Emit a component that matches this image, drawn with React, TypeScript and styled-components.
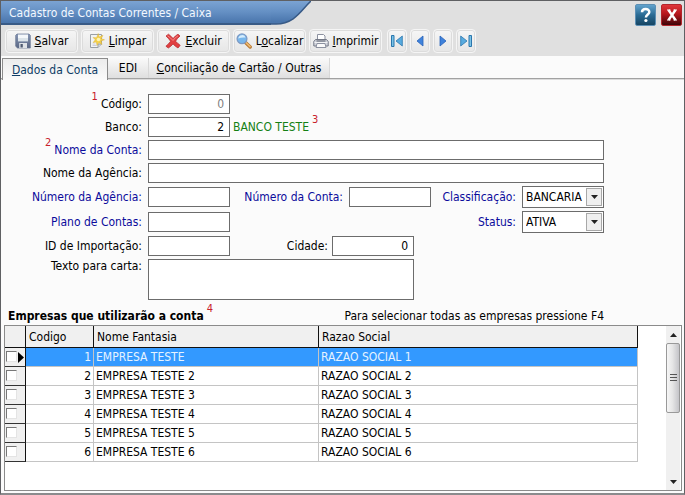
import React from "react";
import styled, { createGlobalStyle, css } from "styled-components";

const Global = createGlobalStyle`
  *, *::before, *::after { box-sizing: border-box; }
  body { margin: 0; background: #fff; }
  body, button, input, select, textarea {
    font-family: "DejaVu Sans Condensed", "DejaVu Sans", Tahoma, sans-serif;
    font-stretch: condensed;
    font-size: 12px;
    line-height: 14px;
    color: #000;
  }
`;

const Window = styled.div`
  display: flex;
  flex-direction: column;
  min-height: 100vh;
  background: #fbfbfb;
  border: 1px solid #5f6063;
  border-bottom: 2px solid #8b8b8d;
`;

const Header = styled.header`
  display: flex;
  justify-content: space-between;
  align-items: flex-start;
  height: 25px;
  background: #e0e0e0;
`;

const TitleBar = styled.div`
  display: flex;
  height: 24px;
`;

const Title = styled.h1`
  margin: 0;
  width: 270px;
  padding: 4px 8px;
  font-size: 12px;
  font-weight: 400;
  line-height: 16px;
  color: #f2f8ff;
  white-space: nowrap;
  background: linear-gradient(#7ba3d3, #6590c4 45%, #4a76ad 90%, #385a86 92%, #385a86);
`;

const WindowButtons = styled.div`
  display: flex;
  gap: 5px;
  padding: 3px 2px 0 0;
`;

const WindowButton = styled.button<{ $close?: boolean }>`
  display: flex;
  width: 21px;
  height: 22px;
  padding: 0;
  align-items: center;
  justify-content: center;
  border: 1px solid ${(p) => (p.$close ? "#b3262c" : "#5c8fb4")};
  border-radius: 2px;
  background: ${(p) =>
    p.$close
      ? "linear-gradient(#e0363b, #b5161c 45%, #3d0508)"
      : "linear-gradient(#62a3cd, #2a6b94 50%, #164563)"};
`;

const Toolbar = styled.div`
  display: flex;
  gap: 3px;
  padding: 3px 4px;
  background: #e0e0e0;
`;

const ToolButton = styled.button`
  display: flex;
  align-items: center;
  justify-content: center;
  gap: 4px;
  width: 73px;
  height: 24px;
  padding: 0;
  border: 1px solid #f5f5f5;
  border-radius: 4px;
  background: linear-gradient(#f6f6f6, #e6e6e6);
  box-shadow: inset 0 0 0 1px #dcdcdc;
  white-space: nowrap;

  svg { flex: none; }
`;

const NavButton = styled(ToolButton)`
  width: 20px;
`;

const NavGroup = styled.div`
  display: flex;
  gap: 3px;
  margin-left: 2px;
`;

const Tabs = styled.div`
  display: flex;
  align-items: flex-end;
  height: 24px;
  padding-left: 1px;
  background: linear-gradient(#fbfbfb, #fbfbfb 22px, #a2a2a2 22px, #a2a2a2 23px, #dcdcdc 23px);
`;

const Tab = styled.button<{ $active?: boolean; $width: number }>`
  width: ${(p) => p.$width}px;
  height: 20px;
  margin-bottom: 2px;
  padding: 0;
  border: 0;
  border-right: 1px solid #d8d8d8;
  background: linear-gradient(#fafafa, #dfdfdf);
  ${(p) =>
    p.$active &&
    css`
      height: 22px;
      margin-bottom: 0;
      border: 1px solid #8c8c8c;
      border-bottom: 0;
      background: linear-gradient(#ececec, #fbfbfb);
      color: #0f3d66;
    `}
`;

const Form = styled.form`
  display: grid;
  grid-template-columns: 137px 82px 107px 82px 1fr 82px;
  gap: 3px 6px;
  align-items: center;
  padding: 14px 80px 0 4px;
`;

const Label = styled.label<{ $required?: boolean; $top?: boolean }>`
  grid-column: ${(p) => (p.$top ? "1" : "auto")};
  align-self: ${(p) => (p.$top ? "start" : "center")};
  text-align: right;
  white-space: nowrap;
  color: ${(p) => (p.$required ? "#0b0b9c" : "#000")};
`;

const FirstLabel = styled(Label)`
  grid-column: 1;
`;

const Mark = styled.span`
  margin-right: 3px;
  line-height: 0;
  vertical-align: 8px;
  font-size: 11px;
  color: #c8202c;
`;

const EndMark = styled(Mark)`
  margin: 0 0 0 3px;
  font-weight: 400;
`;

const fieldBorder = css`
  border: 1px solid #6c6c6c;
  border-radius: 0;
  background: #fff;
`;

const Input = styled.input<{ $wide?: boolean; $muted?: boolean }>`
  ${fieldBorder}
  grid-column: ${(p) => (p.$wide ? "2 / -1" : "auto")};
  width: ${(p) => (p.$wide ? "100%" : "82px")};
  height: 20px;
  padding: 0 5px;
  text-align: ${(p) => (p.$wide ? "left" : "right")};
  color: ${(p) => (p.$muted ? "#808080" : "#000")};
`;

const BankName = styled.output`
  grid-column: 3 / -1;
  margin-left: -3px;
  color: #148014;
`;

const StatusLabel = styled(Label)`
  grid-column: 5;
`;

const SelectBox = styled.div`
  position: relative;
`;

const Select = styled.select`
  ${fieldBorder}
  display: block;
  appearance: none;
  width: 100%;
  height: 22px;
  padding: 0 18px 0 3px;
`;

const SelectArrow = styled.span`
  position: absolute;
  top: 2px;
  right: 2px;
  bottom: 2px;
  display: flex;
  width: 16px;
  align-items: center;
  justify-content: center;
  border: 1px solid #a8a8a8;
  background: #efefef;
  pointer-events: none;
`;

const Span = styled.div`
  grid-column: 2 / -1;
  display: flex;
  align-items: center;
  justify-content: space-between;
  width: 266px;
`;

const InlineField = styled.div`
  display: flex;
  align-items: center;
  gap: 4px;
`;

const TextArea = styled.textarea`
  ${fieldBorder}
  grid-column: 2 / -1;
  display: block;
  width: 266px;
  height: 41px;
  resize: none;
`;

const ListHeader = styled.div`
  display: flex;
  justify-content: space-between;
  padding: 9px 80px 2px 7px;
`;

const ListTitle = styled.h2`
  margin: 0;
  font-size: 12px;
  line-height: 14px;
  font-weight: 700;
`;

const GridFrame = styled.div`
  display: flex;
  flex: 1;
  justify-content: space-between;
  margin: 0 2px 2px 3px;
  border: 1px solid #8b8b8b;
  background: #fff;
`;

const TableArea = styled.div`
  flex: 1;
  padding-right: 28px;
`;

const Table = styled.table`
  width: 100%;
  table-layout: fixed;
  border-collapse: separate;
  border-spacing: 0;
`;

const Th = styled.th`
  height: 22px;
  padding: 0 3px;
  border-right: 1px solid #111;
  border-bottom: 1px solid #111;
  background: #f0f0f0;
  font-weight: 400;
  text-align: left;
`;

const Td = styled.td<{ $num?: boolean }>`
  height: 19px;
  padding: 0 2px;
  border-right: 1px solid #c4c4c4;
  border-bottom: 1px solid #c4c4c4;
  text-align: ${(p) => (p.$num ? "right" : "left")};
`;

const Row = styled.tr<{ $selected?: boolean }>`
  ${(p) =>
    p.$selected &&
    css`
      background: #3399ff;
      color: #e6f3ff;
    `}
`;

const CheckCell = styled(Td)`
  padding: 0 1px;
  border-right: 1px solid #111;
  border-bottom: 1px solid #333;
  background: #f0f0f0;
`;

const CheckWrap = styled.div`
  display: flex;
  align-items: center;
  justify-content: space-between;
`;

const Check = styled.input`
  appearance: none;
  width: 11px;
  height: 11px;
  margin: 0 0 2px;
  border: 1px solid #e4e4e4;
  border-top: 1px solid #777;
  border-left: 1px solid #777;
  background: #fff;
`;

const ScrollBar = styled.div`
  display: flex;
  flex-direction: column;
  width: 14px;
  margin-right: 1px;
  background: #f0f0f0;
`;

const ScrollButton = styled.button`
  display: flex;
  height: 17px;
  padding: 0;
  align-items: center;
  justify-content: center;
  border: 0;
  background: #f0f0f0;
`;

const ScrollTrack = styled.div`
  flex: 1;
`;

const ScrollThumb = styled.div`
  display: flex;
  height: 70px;
  align-items: center;
  justify-content: center;
  border: 1px solid #999;
  border-radius: 2px;
  background: linear-gradient(90deg, #f6f6f6, #e6e6e6 45%, #c4c4c8);
`;

const SaveIcon = () => (
  <svg width="16" height="16" viewBox="0 0 16 16" aria-hidden="true">
    <defs>
      <linearGradient id="disk" x1="0" y1="0" x2="0" y2="1">
        <stop offset="0" stopColor="#8796b4" />
        <stop offset="1" stopColor="#5a6784" />
      </linearGradient>
    </defs>
    <path d="M2 1h12l1.300 1.300v12.700H2.500L.7 13.300V2.300z" fill="url(#disk)" stroke="#66728f" strokeWidth=".7" />
    <path d="M3 1.500h10v6.700H3z" fill="#f4f7fa" />
    <path d="M3 5h10v3.200H3z" fill="#dbe3e9" />
    <path d="M4.200 10h7.800v5H4.200z" fill="#dfe3e7" />
    <path d="M5.500 11h2.300v3.500H5.500z" fill="#4f5b72" />
  </svg>
);

const ClearIcon = () => (
  <svg width="16" height="16" viewBox="0 0 16 16" aria-hidden="true">
    <path d="M1.500 1.500h11v9.500l-3.500 3.500H1.500z" fill="#f1f3f4" stroke="#9a9fa5" />
    <path d="M12.500 11H9v3.500" fill="#d3d7db" stroke="#9a9fa5" />
    <path d="M3.500 11h3M3.500 12.500h4" stroke="#ccd" />
    <path d="M9.200.5l1 3.500L14 2.300l-1.800 3.400 3.300 1.100-3.500 1.200 1 3.500-3.200-2-1.800 3-.7-3.500-3.300.6 2.300-2.800L4 4.500l3.600.2z" fill="#f4d14c" stroke="#d9ab2c" strokeWidth=".4" />
    <circle cx="9.500" cy="6.500" r="1.800" fill="#fff4b0" />
  </svg>
);

const DeleteIcon = () => (
  <svg width="16" height="16" viewBox="0 0 16 16" aria-hidden="true">
    <path
      d="M1 3l2.500-1.800Q6 3 8.100 5.500 10.300 2.500 13 1.200L15 3Q12 5.500 10.600 8.200 12.600 10.500 15.200 12.300L13 15Q10.300 13.500 8 10.900 6 13.500 3.300 15L.9 13.200Q3.700 11 5.600 8.300 3.900 5.700 1 3z"
      fill="#e13f41"
      stroke="#b3242a"
      strokeWidth=".7"
    />
    <path d="M2.500 2.800Q6 5 8 7.500 10 4.500 13 2.800" fill="none" stroke="#f28a86" />
  </svg>
);

const SearchIcon = () => (
  <svg width="16" height="16" viewBox="0 0 16 16" aria-hidden="true">
    <path d="M9.500 9.500l4.700 4.500" stroke="#b87934" strokeWidth="3.400" strokeLinecap="round" />
    <path d="M9.500 9.200l4.600 4.400" stroke="#f0bd73" strokeWidth="1.500" strokeLinecap="round" />
    <circle cx="6" cy="5.800" r="4.900" fill="#78b7ec" stroke="#7e9ac4" strokeWidth="1.300" />
    <path d="M2.300 5.500a3.800 3.800 0 0 1 7.300-1Q5.500 4 2.300 5.500z" fill="#d7edfc" />
  </svg>
);

const PrintIcon = () => (
  <svg width="16" height="16" viewBox="0 0 16 16" aria-hidden="true">
    <path d="M4.500 7V1.500h6L12 3v4" fill="#fff" stroke="#8c91a0" />
    <path d="M2.500 6.500h11l1.700 2v4.500H.8V8.500z" fill="#cfd2da" stroke="#747987" />
    <path d="M3.500 8h9" stroke="#555b68" />
    <path d="M4 10.500h8l1 4H3z" fill="#fafafa" stroke="#8c91a0" />
    <path d="M1.500 9.500h13" stroke="#f2f3f5" />
  </svg>
);

const NavIcon = ({ flip, bar }: { flip?: boolean; bar?: boolean }) => (
  <svg width="14" height="14" viewBox="0 0 14 14" aria-hidden="true">
    <g transform={flip ? "matrix(-1 0 0 1 14 0)" : undefined}>
      {bar && <path d="M1.500 1.500h2.500v11H1.500z" fill="#79c2e6" stroke="#2b76ad" />}
      <path
        d={bar ? "M12.300 2v10L6 7z" : "M10 2v10L4 7z"}
        fill={bar ? "#58abdf" : "#3f83dc"}
        stroke={bar ? "#2b76ad" : "#2962b8"}
        strokeWidth=".8"
      />
    </g>
  </svg>
);

const Triangle = ({ up }: { up?: boolean }) => (
  <svg width="7" height="4" viewBox="0 0 7 4" aria-hidden="true">
    <path d={up ? "M0 4h7L3.500 0z" : "M0 0h7L3.500 4z"} fill="#222" />
  </svg>
);

const tools = [
  { pre: "", key: "S", post: "alvar", icon: <SaveIcon /> },
  { pre: "", key: "L", post: "impar", icon: <ClearIcon /> },
  { pre: "", key: "E", post: "xcluir", icon: <DeleteIcon /> },
  { pre: "L", key: "o", post: "calizar", icon: <SearchIcon /> },
  { pre: "", key: "I", post: "mprimir", icon: <PrintIcon /> },
];

const companies = [1, 2, 3, 4, 5, 6].map((id) => ({
  id,
  name: id === 1 ? "EMPRESA TESTE" : `EMPRESA TESTE ${id}`,
  legal: `RAZAO SOCIAL ${id}`,
}));

const Combo = ({ id, value }: { id: string; value: string }) => (
  <SelectBox>
    <Select id={id} defaultValue={value}>
      <option>{value}</option>
    </Select>
    <SelectArrow>
      <Triangle />
    </SelectArrow>
  </SelectBox>
);

export default function App() {
  return (
    <>
      <Global />
      <Window>
        <Header>
          <TitleBar>
            <Title>Cadastro de Contas Correntes / Caixa</Title>
            <svg width="40" height="24" viewBox="0 0 40 24" aria-hidden="true">
              <defs>
                <linearGradient id="title" x1="0" y1="0" x2="0" y2="1">
                  <stop offset="0" stopColor="#7ba3d3" />
                  <stop offset=".45" stopColor="#6590c4" />
                  <stop offset=".9" stopColor="#4a76ad" />
                </linearGradient>
              </defs>
              <path d="M0 0H40C31 8 24 23 5 23H0z" fill="url(#title)" />
              <path d="M40 0C31 8 24 23 5 23H0" fill="none" stroke="#385a86" strokeWidth="1.500" />
            </svg>
          </TitleBar>
          <WindowButtons>
            <WindowButton type="button" aria-label="Ajuda">
              <svg width="13" height="16" viewBox="0 0 13 16" aria-hidden="true">
                <path d="M3 5.200C3 .9 10.300 1 10.300 5 10.300 7.500 6.900 7.500 6.900 10.500" fill="none" stroke="#fff" strokeWidth="2.500" />
                <circle cx="6.900" cy="13.500" r="1.600" fill="#fff" />
              </svg>
            </WindowButton>
            <WindowButton type="button" $close aria-label="Fechar">
              <svg width="12" height="12" viewBox="0 0 12 12" aria-hidden="true">
                <path d="M2.500 1l7 10M9.500 1l-7 10" stroke="#fff" strokeWidth="2.400" />
                <path d="M1 1h3.500M7.500 1H11M1 11h3.500M7.500 11H11" stroke="#fff" strokeWidth="1.200" />
              </svg>
            </WindowButton>
          </WindowButtons>
        </Header>
        <Toolbar>
          {tools.map((t) => (
            <ToolButton type="button" key={t.post}>
              {t.icon}
              <span>
                {t.pre}
                <u>{t.key}</u>
                {t.post}
              </span>
            </ToolButton>
          ))}
          <NavGroup>
            <NavButton type="button" aria-label="Primeiro"><NavIcon bar /></NavButton>
            <NavButton type="button" aria-label="Anterior"><NavIcon /></NavButton>
            <NavButton type="button" aria-label="Próximo"><NavIcon flip /></NavButton>
            <NavButton type="button" aria-label="Último"><NavIcon flip bar /></NavButton>
          </NavGroup>
        </Toolbar>
        <Tabs role="tablist">
          <Tab type="button" role="tab" aria-selected="true" $active $width={106}><u>D</u>ados da Conta</Tab>
          <Tab type="button" role="tab" aria-selected="false" $width={41}>EDI</Tab>
          <Tab type="button" role="tab" aria-selected="false" $width={181}><u>C</u>onciliação de Cartão / Outras</Tab>
        </Tabs>
        <Form>
          <FirstLabel htmlFor="codigo"><Mark>1</Mark>Código:</FirstLabel>
          <Input id="codigo" defaultValue="0" $muted />
          <FirstLabel htmlFor="banco">Banco:</FirstLabel>
          <Input id="banco" defaultValue="2" />
          <BankName htmlFor="banco">BANCO TESTE<EndMark>3</EndMark></BankName>
          <FirstLabel htmlFor="nome" $required><Mark>2</Mark>Nome da Conta:</FirstLabel>
          <Input id="nome" $wide />
          <FirstLabel htmlFor="agencia">Nome da Agência:</FirstLabel>
          <Input id="agencia" $wide />
          <FirstLabel htmlFor="numAgencia" $required>Número da Agência:</FirstLabel>
          <Input id="numAgencia" />
          <Label htmlFor="numConta" $required>Número da Conta:</Label>
          <Input id="numConta" />
          <Label htmlFor="classe" $required>Classificação:</Label>
          <Combo id="classe" value="BANCARIA" />
          <FirstLabel htmlFor="plano" $required>Plano de Contas:</FirstLabel>
          <Input id="plano" />
          <StatusLabel htmlFor="status" $required>Status:</StatusLabel>
          <Combo id="status" value="ATIVA" />
          <FirstLabel htmlFor="importacao">ID de Importação:</FirstLabel>
          <Span>
            <Input id="importacao" />
            <InlineField>
              <Label htmlFor="cidade">Cidade:</Label>
              <Input id="cidade" defaultValue="0" />
            </InlineField>
          </Span>
          <Label htmlFor="carta" $top>Texto para carta:</Label>
          <TextArea id="carta" />
        </Form>
        <ListHeader>
          <ListTitle>Empresas que utilizarão a conta<EndMark>4</EndMark></ListTitle>
          <span>Para selecionar todas as empresas pressione F4</span>
        </ListHeader>
        <GridFrame>
          <TableArea>
            <Table>
              <colgroup>
                <col width="21" />
                <col width="68" />
                <col width="225" />
                <col />
              </colgroup>
              <thead>
                <tr>
                  <Th aria-label="Seleção" />
                  <Th>Codigo</Th>
                  <Th>Nome Fantasia</Th>
                  <Th>Razao Social</Th>
                </tr>
              </thead>
              <tbody>
                {companies.map((c) => (
                  <Row key={c.id} $selected={c.id === 1}>
                    <CheckCell>
                      <CheckWrap>
                        <Check type="checkbox" aria-label={c.name} />
                        {c.id === 1 && (
                          <svg width="6" height="11" viewBox="0 0 6 11" aria-hidden="true">
                            <path d="M0 0v11l6-5.500z" />
                          </svg>
                        )}
                      </CheckWrap>
                    </CheckCell>
                    <Td $num>{c.id}</Td>
                    <Td>{c.name}</Td>
                    <Td>{c.legal}</Td>
                  </Row>
                ))}
              </tbody>
            </Table>
          </TableArea>
          <ScrollBar>
            <ScrollButton type="button" aria-label="Rolar para cima"><Triangle up /></ScrollButton>
            <ScrollTrack>
              <ScrollThumb>
                <svg width="7" height="8" viewBox="0 0 7 8" aria-hidden="true">
                  <path d="M0 .5h7M0 3.500h7M0 6.500h7" stroke="#555" />
                </svg>
              </ScrollThumb>
            </ScrollTrack>
            <ScrollButton type="button" aria-label="Rolar para baixo"><Triangle /></ScrollButton>
          </ScrollBar>
        </GridFrame>
      </Window>
    </>
  );
}
